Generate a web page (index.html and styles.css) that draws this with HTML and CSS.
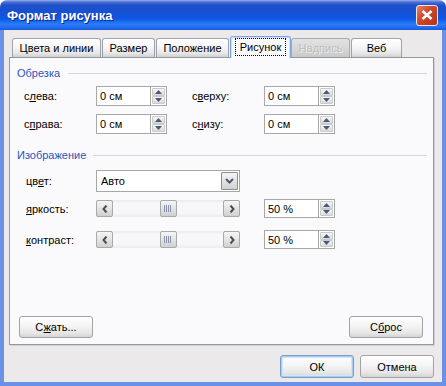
FILE: index.html
```html
<!DOCTYPE html>
<html lang="ru">
<head>
<meta charset="utf-8">
<title>Формат рисунка</title>
<link rel="stylesheet" href="styles.css">
</head>
<body>
<div class="window">
  <div class="titlebar">
    <span class="title">Формат рисунка</span>
    <div class="close">
      <svg width="12" height="10" viewBox="0 0 12 10"><path d="M1.5 1 L10.5 9 M10.5 1 L1.5 9" stroke="#fff" stroke-width="2.6" fill="none"/></svg>
    </div>
  </div>
  <div class="client">
    <div class="tabs">
      <div class="tab w1">Цвета и линии</div>
      <div class="tab w2">Размер</div>
      <div class="tab w3">Положение</div>
      <div class="tab sel"><span class="focus">Рисунок</span></div>
      <div class="tab dis">Надпись</div>
      <div class="tab w6">Веб</div>
    </div>
    <div class="panel">
      <div class="group"><span>Обрезка</span><i></i></div>
      <div class="row r1">
        <span class="lbl">с<u>л</u>ева:</span>
        <div class="spin"><div class="field">0 см</div><div class="spbtns"><b><svg width="7" height="4" viewBox="0 0 7 4"><path d="M3.5 0 L7 4 L0 4Z" fill="#4A5A7A"/></svg></b><b><svg width="7" height="4" viewBox="0 0 7 4"><path d="M0 0 L7 0 L3.5 4Z" fill="#4A5A7A"/></svg></b></div></div>
        <span class="lbl lbl2">с<u>в</u>ерху:</span>
        <div class="spin"><div class="field">0 см</div><div class="spbtns"><b><svg width="7" height="4" viewBox="0 0 7 4"><path d="M3.5 0 L7 4 L0 4Z" fill="#4A5A7A"/></svg></b><b><svg width="7" height="4" viewBox="0 0 7 4"><path d="M0 0 L7 0 L3.5 4Z" fill="#4A5A7A"/></svg></b></div></div>
      </div>
      <div class="row r2">
        <span class="lbl">с<u>п</u>рава:</span>
        <div class="spin"><div class="field">0 см</div><div class="spbtns"><b><svg width="7" height="4" viewBox="0 0 7 4"><path d="M3.5 0 L7 4 L0 4Z" fill="#4A5A7A"/></svg></b><b><svg width="7" height="4" viewBox="0 0 7 4"><path d="M0 0 L7 0 L3.5 4Z" fill="#4A5A7A"/></svg></b></div></div>
        <span class="lbl lbl2">с<u>н</u>изу:</span>
        <div class="spin"><div class="field">0 см</div><div class="spbtns"><b><svg width="7" height="4" viewBox="0 0 7 4"><path d="M3.5 0 L7 4 L0 4Z" fill="#4A5A7A"/></svg></b><b><svg width="7" height="4" viewBox="0 0 7 4"><path d="M0 0 L7 0 L3.5 4Z" fill="#4A5A7A"/></svg></b></div></div>
      </div>
      <div class="group g2"><span>Изображение</span><i></i></div>
      <div class="row r3">
        <span class="lbl lblb">цв<u>е</u>т:</span>
        <div class="combo"><span class="val">Авто</span><span class="dd"><svg width="9" height="6" viewBox="0 0 9 6"><path d="M1 1 L4.5 4.5 L8 1" stroke="#4A5A7A" stroke-width="2" fill="none"/></svg></span></div>
      </div>
      <div class="row r4">
        <span class="lbl lblb"><u>я</u>ркость:</span>
        <div class="sb">
          <span class="sbtn"><svg width="6" height="8" viewBox="0 0 6 8"><path d="M4.5 0.5 L1.5 4 L4.5 7.5" stroke="#4D4D4D" stroke-width="2" fill="none"/></svg></span>
          <span class="track"><span class="thumb"><svg width="8" height="7" viewBox="0 0 8 7"><path d="M0.5 0 V7 M2.5 0 V7 M4.5 0 V7 M6.5 0 V7" stroke="#8791AE" stroke-width="1"/></svg></span></span>
          <span class="sbtn"><svg width="6" height="8" viewBox="0 0 6 8"><path d="M1.5 0.5 L4.5 4 L1.5 7.5" stroke="#4D4D4D" stroke-width="2" fill="none"/></svg></span>
        </div>
        <div class="spin sp2"><div class="field">50 %</div><div class="spbtns"><b><svg width="7" height="4" viewBox="0 0 7 4"><path d="M3.5 0 L7 4 L0 4Z" fill="#4A5A7A"/></svg></b><b><svg width="7" height="4" viewBox="0 0 7 4"><path d="M0 0 L7 0 L3.5 4Z" fill="#4A5A7A"/></svg></b></div></div>
      </div>
      <div class="row r5">
        <span class="lbl lblb"><u>к</u>онтраст:</span>
        <div class="sb">
          <span class="sbtn"><svg width="6" height="8" viewBox="0 0 6 8"><path d="M4.5 0.5 L1.5 4 L4.5 7.5" stroke="#4D4D4D" stroke-width="2" fill="none"/></svg></span>
          <span class="track"><span class="thumb"><svg width="8" height="7" viewBox="0 0 8 7"><path d="M0.5 0 V7 M2.5 0 V7 M4.5 0 V7 M6.5 0 V7" stroke="#8791AE" stroke-width="1"/></svg></span></span>
          <span class="sbtn"><svg width="6" height="8" viewBox="0 0 6 8"><path d="M1.5 0.5 L4.5 4 L1.5 7.5" stroke="#4D4D4D" stroke-width="2" fill="none"/></svg></span>
        </div>
        <div class="spin sp2"><div class="field">50 %</div><div class="spbtns"><b><svg width="7" height="4" viewBox="0 0 7 4"><path d="M3.5 0 L7 4 L0 4Z" fill="#4A5A7A"/></svg></b><b><svg width="7" height="4" viewBox="0 0 7 4"><path d="M0 0 L7 0 L3.5 4Z" fill="#4A5A7A"/></svg></b></div></div>
      </div>
      <div class="actions">
        <button class="btn">С<u>ж</u>ать...</button>
        <button class="btn">С<u>б</u>рос</button>
      </div>
    </div>
    <div class="footer">
      <button class="btn big ok">ОК</button>
      <button class="btn big">Отмена</button>
    </div>
  </div>
</div>
</body>
</html>
```

FILE: styles.css
```css
* { box-sizing: border-box; }
html, body { margin: 0; padding: 0; }
body {
  width: 446px; height: 386px; overflow: hidden;
  background: #ffffff;
  font-family: "Liberation Sans", Arial, sans-serif;
  font-size: 11px; color: #000;
}
u { text-decoration: underline; text-underline-offset: 1px; }
.window {
  width: 446px; height: 386px;
  display: flex; flex-direction: column;
  border-radius: 7px 7px 0 0; overflow: hidden;
  background: #ECE9EB;
}
.titlebar {
  height: 30px; flex: none;
  display: flex; align-items: center; justify-content: space-between;
  padding: 0 8px 0 7px;
  background: linear-gradient(to bottom, #9AAEE6 0px, #4A73D6 2px, #2150C8 5px, #1650D4 12px, #0D58E6 19px, #2A7CF8 24px, #2470F2 27px, #1A58DC 30px);
}
.title {
  color: #fff; font-weight: bold; font-size: 13px;
  text-shadow: 1px 1px 0 #0B2A8A;
}
.close {
  width: 22px; height: 21px;
  border: 1px solid #F4E4E0; border-radius: 3px;
  background: linear-gradient(135deg, #E88468 0%, #CF4A2C 40%, #B7301A 100%);
  display: flex; align-items: center; justify-content: center;
}
.client {
  flex: 1;
  border: 4px solid #6A90E8; border-top: 0;
  padding: 6px 8px 4px 5px;
  display: flex; flex-direction: column;
}
.tabs {
  display: flex; align-items: flex-end;
  height: 21px; margin-left: 3px;
}
.tab {
  height: 19px; margin-right: 1px;
  border: 1px solid #9FA4AC; border-bottom: 0;
  border-radius: 3px 3px 0 0;
  background: linear-gradient(to bottom, #FFFFFF 0%, #F6F6F6 45%, #E6E6E6 80%, #D0D0D0 100%);
  display: flex; align-items: center; justify-content: center;
  white-space: nowrap;
}
.w1 { width: 89px; }
.w2 { width: 53px; }
.w3 { width: 73px; }
.sel {
  width: 61px; height: 22px; margin-bottom: -1px; margin-right: 0;
  position: relative; z-index: 1;
  border-color: #7EA6E6;
  background: #FAFAFD;
  box-shadow: inset 1px 1px 0 #D0E0FA, inset -1px 0 0 #D0E0FA;
  padding-bottom: 1px;
}
.focus { outline: 1px dotted #000; outline-offset: 2px; padding: 0 2px; }
.dis {
  width: 59px; color: #BDBDBD; text-shadow: 1px 1px 0 #EDEDED;
  background: linear-gradient(to bottom, #E2E2E2 0%, #D6D6D6 60%, #C8C8C8 100%);
  border-color: #AAAAAA;
}
.w6 { width: 51px; }
.panel {
  flex: none;
  width: 425px; height: 288px;
  border: 1px solid #919B9C;
  background: #FAFAFD;
  box-shadow: 1px 1px 0 #D2D0D4;
  padding: 8px 6px 6px 7px;
  display: flex; flex-direction: column;
}
.group {
  display: flex; align-items: center;
  height: 14px; color: #2B56B8;
}
.group i { flex: 1; height: 1px; background: #D3D4DC; margin-left: 8px; }
.g2 { margin-top: 14px; }
.g2 i { margin-left: 7px; }
.row { display: flex; align-items: center; }
.r1 { margin-top: 6px; height: 20px; padding-left: 7px; }
.r2 { margin-top: 8px; height: 20px; padding-left: 7px; }
.r3 { margin-top: 8px; height: 22px; padding-left: 9px; }
.r4 { margin-top: 7px; height: 19px; padding-left: 9px; }
.r5 { margin-top: 12px; height: 19px; padding-left: 9px; }
.lbl { width: 72px; }
.lbl2 { margin-left: 25px; }
.lblb { width: 70px; }
.spin { display: flex; width: 71px; height: 100%; }
.sp2 { margin-left: 24px; }
.field {
  width: 54px; height: 100%;
  border: 1px solid #A7A7A7; border-right: 0;
  background: #fff; padding-left: 3px;
  display: flex; align-items: center;
}
.spbtns {
  width: 17px; height: 100%;
  border: 1px solid #A7A7A7; background: #fff;
  padding: 1px; display: flex; flex-direction: column; gap: 0;
}
.spbtns b {
  flex: 1;
  border: 1px solid #C9C9C9; border-radius: 1px;
  background: linear-gradient(to bottom, #F7F7F7, #DADADA);
  display: flex; align-items: center; justify-content: center;
}
.combo {
  width: 144px; height: 100%;
  border: 1px solid #A7A7A7; background: #fff;
  display: flex;
}
.combo .val { flex: 1; padding-left: 4px; display: flex; align-items: center; }
.combo .dd {
  width: 17px; margin: 1px;
  border: 1px solid #8E8E8E; border-radius: 1px;
  background: linear-gradient(to bottom, #F4F4F4, #D2D2D2);
  display: flex; align-items: center; justify-content: center;
}
.sb {
  width: 144px; height: 17px;
  display: flex;
  background: linear-gradient(to bottom, #EAEAEA 0px, #F7F7F9 3px, #F7F7F9 13px, #EBEBEB 17px);
}
.sbtn, .thumb {
  width: 17px; height: 17px;
  border: 1px solid #A9A9A9; border-radius: 2px;
  background: linear-gradient(to bottom, #F5F5F5, #E4E4E4 50%, #D0D0D0);
  display: flex; align-items: center; justify-content: center;
}
.track { flex: 1; display: flex; justify-content: center; }
.actions {
  margin-top: auto;
  display: flex; justify-content: space-between;
  padding: 0 4px 0 2px;
}
.btn {
  width: 74px; height: 22px; padding: 0;
  border: 1px solid #A3A3A3; border-radius: 3px;
  background: linear-gradient(to bottom, #FFFFFF 0%, #F4F4F4 45%, #E6E6E6 80%, #D4D4D4 100%);
  font-family: inherit; font-size: 11px; color: #000;
}
.footer {
  display: flex; justify-content: flex-end; gap: 6px;
  margin-top: 10px;
}
.big { height: 23px; }
.ok {
  border-color: #7E9BC8;
  box-shadow: inset 0 0 0 1px #A6CCF4, inset 0 0 0 2px #D2E6FB;
}
```
